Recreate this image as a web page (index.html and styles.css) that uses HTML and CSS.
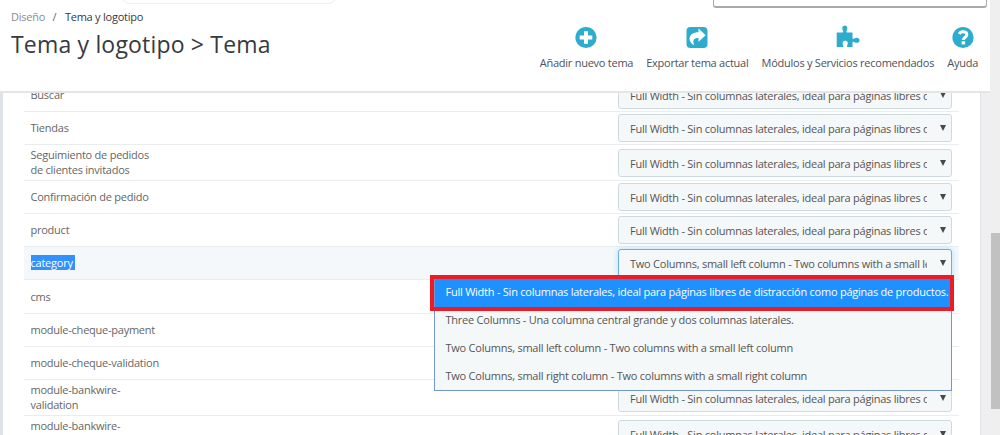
FILE: index.html
```html
<!DOCTYPE html>
<html lang="es">
<head>
<meta charset="utf-8">
<title>Tema y logotipo</title>
<link rel="stylesheet" href="styles.css">
</head>
<body>
<div class="page">
  <div class="main">
    <header class="header">
      <div class="search-pill"></div>
      <div class="top-box"></div>
      <div class="heading">
        <nav class="breadcrumb"><span class="parent">Diseño</span><span class="slash">/</span><span>Tema y logotipo</span></nav>
        <h1 class="title">Tema y logotipo &gt; Tema</h1>
      </div>
      <div class="toolbar">
        <a class="tool add"><svg class="icon" viewBox="0 0 24 24"><circle cx="12" cy="12.500" r="10.600"/><path class="cut" d="M10 6.200h4v4.300h4.300v4h-4.300v4.300h-4v-4.300h-4.300v-4h4.300z"/></svg><span>Añadir nuevo tema</span></a>
        <a class="tool export"><svg class="icon" viewBox="0 0 24 24"><rect x="1.500" y="2" width="21" height="21" rx="4"/><path class="cut" d="M13.500 3.600l7.200 6.600-7.200 6.600v-3.700c-4.700-.1-6.300 2.100-4.300 7.200C2.200 16.500 2.800 7.300 13.500 7.200z"/></svg><span>Exportar tema actual</span></a>
        <a class="tool modules"><svg class="icon" viewBox="0 0 24 24"><path d="M.700 7.500h5.900c.9 0 .8-1.200.4-1.900C5.600 3.200 6.500.4 8.800.4s3.300 2.800 1.900 5.200c-.4.700-.5 1.900.4 1.900h5.400v5.400c0 1 1.100 1 1.900.5 2.300-1.400 5.200-.5 5.200 1.900s-2.900 3.300-5.200 1.900c-.8-.5-1.900-.5-1.900.5v4.300h-4.900c-.7 0-.8-.8-.4-1.500 1.300-2.500.4-4.700-2-4.700s-3.300 2.200-2 4.700c.4.700.3 1.500-.4 1.500H.700z"/></svg><span>Módulos y Servicios recomendados</span></a>
        <a class="tool help"><svg class="icon" viewBox="0 0 24 24"><circle cx="12" cy="12.500" r="10.600"/><path class="mark" d="M8.300 9c1.600-3.400 7.600-2.900 7.500.8 0 2.500-3.400 2.500-3.400 5.100"/><rect class="cut" x="10.600" y="16.300" width="3.500" height="3.100"/></svg><span>Ayuda</span></a>
      </div>
    </header>
    <main class="content">
      <div class="panel">
        <div class="row"><span class="name">Buscar</span><div class="select"><span>Full Width - Sin columnas laterales, ideal para páginas libres d</span></div></div>
        <div class="row"><span class="name">Tiendas</span><div class="select"><span>Full Width - Sin columnas laterales, ideal para páginas libres d</span></div></div>
        <div class="row tall"><span class="name">Seguimiento de pedidos de clientes invitados</span><div class="select"><span>Full Width - Sin columnas laterales, ideal para páginas libres d</span></div></div>
        <div class="row"><span class="name">Confirmación de pedido</span><div class="select"><span>Full Width - Sin columnas laterales, ideal para páginas libres d</span></div></div>
        <div class="row"><span class="name">product</span><div class="select"><span>Full Width - Sin columnas laterales, ideal para páginas libres d</span></div></div>
        <div class="row active"><span class="name"><mark>category</mark></span>
          <div class="select focus"><span>Two Columns, small left column - Two columns with a small lef</span></div>
          <ul class="menu">
            <li class="chosen">Full Width - Sin columnas laterales, ideal para páginas libres de distracción como páginas de productos.</li>
            <li>Three Columns - Una columna central grande y dos columnas laterales.</li>
            <li>Two Columns, small left column - Two columns with a small left column</li>
            <li>Two Columns, small right column - Two columns with a small right column</li>
          </ul>
          <div class="highlight"></div>
        </div>
        <div class="row cms"><span class="name">cms</span></div>
        <div class="row"><span class="name wide">module-cheque-payment</span></div>
        <div class="row"><span class="name wide">module-cheque-validation</span></div>
        <div class="row tall"><span class="name">module-bankwire-<br>validation</span><div class="select"><span>Full Width - Sin columnas laterales, ideal para páginas libres d</span></div></div>
        <div class="row tall"><span class="name">module-bankwire-<br>payment</span><div class="select"><span>Full Width - Sin columnas laterales, ideal para páginas libres d</span></div></div>
      </div>
    </main>
  </div>
  <div class="scrollbar"><div class="thumb"></div></div>
</div>
</body>
</html>
```
FILE: styles.css
```css
* { box-sizing: border-box; }
body { margin: 0; font-family: "Open Sans", "Noto Sans", sans-serif; font-size: 11px; letter-spacing: -0.24px; color: #666; }
.page { display: flex; width: 1000px; height: 435px; overflow: hidden; background: #efeff0; }
.main { width: 990px; display: flex; flex-direction: column; }
.header { position: relative; z-index: 2; flex: none; height: 93px; background: #fff; border-bottom: 2px solid #e3e5e6; display: flex; justify-content: space-between; overflow: hidden; }
.search-pill { position: absolute; left: 121px; top: -20px; width: 216px; height: 24px; border: 1px solid #eee; border-radius: 9px; }
.top-box { position: absolute; left: 713px; top: -20px; width: 274px; height: 28px; border: 1px solid #aaa; border-bottom: 2px solid #aaa; border-radius: 3px; }
.heading { padding: 9px 0 0 11px; }
.breadcrumb { display: flex; line-height: 16px; color: #363a41; }
.parent { color: #8b8b8b; }
.slash { margin: 0 8.500px 0 7.500px; color: #666; }
.title { margin: 3px 0 0; font-size: 23px; letter-spacing: 0.18px; line-height: 32px; font-weight: 400; color: #363a41; }
.toolbar { display: flex; gap: 13px; padding: 25px 12px 0 0; color: #4d5258; }
.tool { display: flex; flex-direction: column; align-items: center; line-height: 16px; white-space: nowrap; }
.tool span { letter-spacing: -0.25px; }
.icon { width: 24px; height: 24px; margin-bottom: 6px; fill: #2eacce; overflow: visible; }
.icon .cut { fill: #fff; }
.icon .mark { fill: none; stroke: #fff; stroke-width: 3; }
.content { flex: none; width: 981px; height: 342px; padding: 0 1px 0 3px; overflow: hidden; background: #dfe2e7; }
.panel { display: flow-root; height: 342px; padding: 0 21px; background: #fff; }
.row { position: relative; display: flex; justify-content: space-between; align-items: center; height: 33px; padding: 0 7px 0 6.500px; border-bottom: 1px solid #eaeded; }
.row:first-child { margin-top: -14px; }
.row.tall { height: 36px; }
.row.cms { height: 34px; }
.row.active { background: #f4f8fb; }
.name { width: 130px; margin-top: -1px; line-height: 15px; }
.name.wide { width: 180px; }
mark { padding-right: 2px; background: #3390ff; color: #fff; }
.select { position: relative; width: 334px; height: 28px; padding: 1px 24px 0 11px; border: 1px solid #cddbdf; border-radius: 3px; background: #f5f8f9; line-height: 25px; color: #555; }
.select span { display: block; overflow: hidden; white-space: nowrap; }
.select::after { content: ""; position: absolute; right: 5px; top: 10px; border: 3px solid transparent; border-top: 6px solid #484848; border-bottom: 0; }
.select.focus { border-color: #66afe9; box-shadow: 0 0 6px #b9dcf5; }
.menu { position: absolute; z-index: 3; left: 410px; top: 31px; width: 518px; height: 113px; margin: 0; padding: 0; list-style: none; background: #f5f8f9; border: 1px solid #7396cf; white-space: nowrap; color: #555; }
.menu li { height: 28px; padding-left: 10.500px; line-height: 26px; }
.menu .chosen { background: #1e90ff; color: #fff; }
.highlight { position: absolute; z-index: 4; left: 406px; top: 28px; width: 524px; height: 36px; border: 4px solid #ed1c24; }
.scrollbar { width: 10px; padding: 233px 0 0 1px; background: #efefef; }
.thumb { height: 176px; background: #c1c1c1; }
```
